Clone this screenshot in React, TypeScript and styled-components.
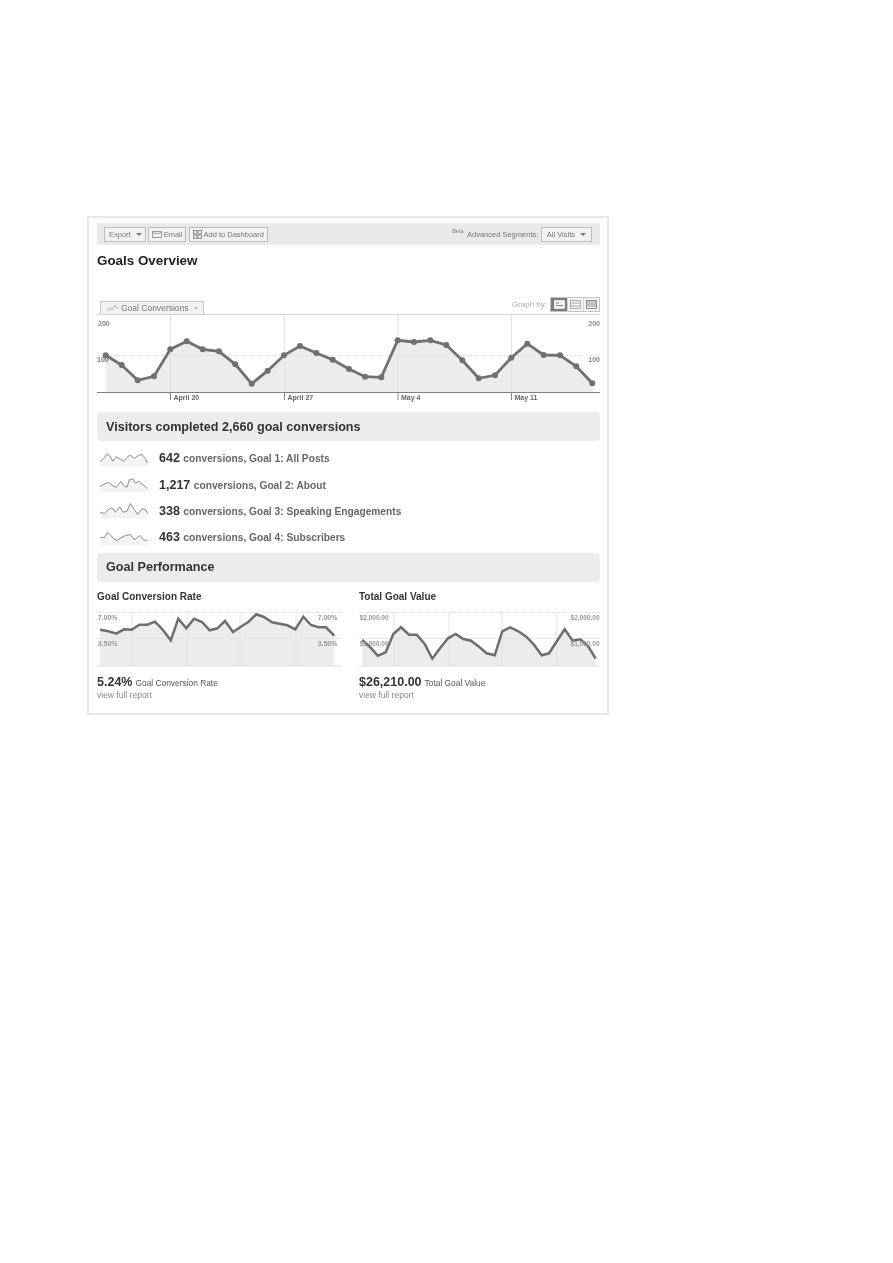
import React from 'react';
import styled, { createGlobalStyle } from 'styled-components';

const GlobalStyle = createGlobalStyle`
  html, body {
    margin: 0;
    padding: 0;
    background: #fff;
    font-family: "Liberation Sans", Arial, sans-serif;
  }
`;

// points read off the reference, in page pixels
const mainPoints: number[][] = [
  [105.7, 355.3], [121.7, 365], [137.7, 380.3], [154, 376.3], [170.3, 349.3], [186.7, 341.3],
  [202.7, 349.3], [219, 351.3], [235.3, 364.3], [251.7, 383.7], [267.7, 370.7], [284, 355.3],
  [300, 346], [316.3, 353], [332.7, 359.7], [349, 369], [365, 376.7], [381.3, 377.3],
  [397.7, 340.3], [414, 342], [430.3, 340.3], [446.3, 345], [462.3, 360.3], [478.7, 378.3],
  [495, 375.3], [511.3, 357.7], [527.3, 343.7], [543.7, 355], [560, 355.3], [576.3, 366.3],
  [592.3, 383.3],
];

const rateRaw = [
  [45, 149], [70, 154], [94, 161], [117, 148], [140, 149], [163, 134], [187, 134], [210, 125],
  [234, 150], [257, 181], [280, 116], [304, 145], [327, 116], [351, 126], [374, 151], [397, 145],
  [420, 123], [444, 156], [467, 140], [490, 126], [514, 103], [537, 111], [561, 127], [584, 131],
  [607, 136], [631, 148], [655, 110], [678, 135], [701, 142], [723, 142], [748, 167],
];

const valueRaw = [
  [52, 180], [75, 201], [98, 227], [122, 217], [145, 162], [168, 142], [192, 164], [215, 164],
  [239, 192], [262, 236], [285, 205], [309, 175], [332, 162], [355, 177], [378, 182], [402, 200],
  [425, 220], [449, 226], [472, 154], [495, 142], [519, 153], [544, 170], [567, 194], [590, 226],
  [612, 220], [636, 183], [659, 148], [683, 182], [706, 178], [729, 198], [752, 236],
];

// sparkline points in 3x crop coordinates, with the y shift of their crop
const sparkShapes: { shift: number; raw: number[][] }[] = [
  {
    shift: -2.5,
    raw: [[10, 38], [20, 30], [30, 17], [38, 22], [48, 38], [58, 25], [70, 32], [80, 38], [95, 22], [103, 22], [112, 30], [125, 20], [135, 18], [145, 30], [152, 45]],
  },
  {
    shift: -28.9,
    raw: [[10, 115], [22, 108], [35, 103], [45, 112], [58, 118], [72, 100], [80, 112], [90, 118], [97, 95], [108, 92], [115, 105], [125, 100], [140, 112], [152, 122]],
  },
  {
    shift: -3.5,
    raw: [[10, 38], [22, 42], [35, 30], [45, 25], [55, 38], [68, 22], [78, 38], [90, 35], [100, 12], [112, 30], [122, 45], [135, 28], [145, 30], [152, 42]],
  },
  {
    shift: -29.5,
    raw: [[10, 110], [22, 112], [32, 95], [42, 105], [50, 115], [60, 120], [72, 112], [85, 105], [100, 102], [112, 118], [122, 110], [130, 105], [140, 118], [152, 120]],
  },
];

const toLine = (pts: number[][]) => pts.map((p) => `${p[0].toFixed(1)},${p[1].toFixed(1)}`).join(' ');

const toArea = (pts: number[][], base: number) =>
  `${pts[0][0].toFixed(1)},${base} ${toLine(pts)} ${pts[pts.length - 1][0].toFixed(1)},${base}`;

const Page = styled.div`
  width: 893px;
  height: 1263px;
  padding: 216px 0 0 87px;
  box-sizing: border-box;
`;

const Panel = styled.div`
  width: 522px;
  height: 499px;
  box-sizing: border-box;
  border: 2px solid #e8e8e8;
  padding: 5px 7px 0 8px;
  color: #555;
  filter: grayscale(1) blur(0.3px);
`;

const Toolbar = styled.div`
  height: 22px;
  background: #e8e9e9;
  display: flex;
  align-items: center;
  padding: 0 8px 0 7px;
  gap: 2.5px;
  font-size: 7.5px;
`;

const ToolButton = styled.div`
  height: 15px;
  box-sizing: border-box;
  border: 1px solid #bdbdbd;
  background: #f2f2f2;
  color: #777;
  display: flex;
  align-items: center;
  gap: 1.5px;
  padding: 0 3px;
  white-space: nowrap;
`;

const ExportButton = styled(ToolButton)`
  padding: 0 3px 0 4px;
  gap: 3px;
`;

const SegmentButton = styled(ToolButton)`
  padding: 0 5px;
  gap: 3px;
`;

const Caret = styled.span`
  width: 0;
  height: 0;
  border-left: 3px solid transparent;
  border-right: 3px solid transparent;
  border-top: 3px solid #777;
  margin-left: 2px;
`;

const TabCaret = styled(Caret)`
  border-top-color: #bbb;
  border-left-width: 2.5px;
  border-right-width: 2.5px;
`;

const Spacer = styled.div`
  flex: 1;
`;

const Beta = styled.sup`
  font-size: 5.5px;
  color: #777;
  margin-right: 1px;
  line-height: 1;
  align-self: flex-start;
  margin-top: 6px;
`;

const SegmentLabel = styled.span`
  color: #777;
`;

const Heading = styled.h1`
  margin: 8px 0 0 0;
  height: 16px;
  font-size: 13.4px;
  line-height: 16px;
  font-weight: bold;
  color: #222;
`;

const GraphHead = styled.div`
  height: 45px;
  display: flex;
  align-items: flex-end;
  justify-content: space-between;
  padding: 0 0 0 3px;
  border-bottom: 1px solid #d4d4d4;
`;

const MetricTab = styled.div`
  height: 13px;
  box-sizing: border-box;
  width: 104px;
  border: 1px solid #c8c8c8;
  border-bottom: none;
  background: #f2f2f2;
  color: #777;
  font-size: 8.5px;
  display: flex;
  align-items: center;
  padding-left: 6px;
  gap: 3px;
`;

const GraphBy = styled.div`
  display: flex;
  align-items: center;
  height: 15px;
  padding-bottom: 2px;
  font-size: 8px;
  color: #aaa;
  gap: 3px;
`;

const ViewSwitch = styled.div`
  display: flex;
  border: 1px solid #c4c4c4;
  height: 15px;
  box-sizing: border-box;
`;

const ViewButton = styled.div<{ $active?: boolean }>`
  width: 16px;
  box-sizing: border-box;
  display: flex;
  align-items: center;
  justify-content: center;
  background: ${(p) => (p.$active ? '#7b7b7b' : '#f4f4f4')};
  border-left: ${(p) => (p.$active ? 'none' : '1px solid #d4d4d4')};
`;

const ChartSvg = styled.svg`
  display: block;
  font-family: "Liberation Sans", Arial, sans-serif;
`;

const SectionBar = styled.div<{ $top: number }>`
  margin-top: ${(p) => p.$top}px;
  height: 29px;
  background: #ececec;
  border-radius: 4px;
  display: flex;
  align-items: center;
  padding-left: 9px;
  font-size: 12.6px;
  font-weight: bold;
  color: #333;
`;

const GoalList = styled.div`
  display: flex;
  flex-direction: column;
  padding: 4px 0 2px 3px;
`;

const GoalRow = styled.div`
  height: 26.4px;
  display: flex;
  align-items: center;
  gap: 11px;
  font-size: 10.2px;
  font-weight: bold;
  color: #666;
`;

const GoalCount = styled.span`
  font-size: 12.5px;
  color: #333;
  margin-right: 3.5px;
`;

const Columns = styled.div`
  display: grid;
  grid-template-columns: 262px 1fr;
`;

const Column = styled.div`
  display: flex;
  flex-direction: column;
`;

const ColumnTitle = styled.div`
  margin: 8px 0 3px;
  height: 13px;
  line-height: 13px;
  font-size: 10px;
  font-weight: bold;
  color: #333;
`;

const Total = styled.div`
  margin-top: 7px;
  display: flex;
  align-items: baseline;
  gap: 3px;
  height: 16px;
  font-size: 8.4px;
  color: #555;
`;

const TotalValue = styled.span`
  font-size: 12.5px;
  font-weight: bold;
  color: #333;
`;

const ReportLink = styled.div`
  font-size: 8.5px;
  line-height: 9px;
  color: #888;
`;

const DashIcon = () => (
  <svg width="9" height="9" viewBox="0 0 9 9" fill="none" stroke="#777" strokeWidth="0.8">
    <rect x="0.5" y="0.5" width="3.4" height="3.4" />
    <rect x="5" y="0.5" width="3.4" height="3.4" />
    <rect x="0.5" y="5" width="3.4" height="3.4" />
    <rect x="5" y="5" width="3.4" height="3.4" />
  </svg>
);

const MailIcon = () => (
  <svg width="10" height="7" viewBox="0 0 10 7" fill="none" stroke="#888" strokeWidth="0.8">
    <rect x="0.5" y="0.5" width="9" height="6" />
    <path d="M0.5 1 L3 2.5 H7 L9.5 1" />
  </svg>
);

const LineIcon = () => (
  <svg width="11" height="8" viewBox="0 0 11 8" fill="none" stroke="#999" strokeWidth="0.8">
    <path d="M0.5 7 L3 4 L5 6 L8 1.5 L10.5 4.5" />
  </svg>
);

const CompactViewIcon = () => (
  <svg width="11" height="9" viewBox="0 0 11 9" fill="#f2f2f2" stroke="#f2f2f2" strokeWidth="0.8">
    <rect x="0.5" y="0.5" width="10" height="8" />
    <path d="M2 3 H5 M2 5.5 H9" stroke="#666" fill="none" />
  </svg>
);

const ViewIcon = ({ lines, tone }: { lines: number[]; tone: string }) => (
  <svg width="11" height="9" viewBox="0 0 11 9" fill="none" stroke={tone} strokeWidth="0.8">
    <rect x="0.5" y="0.5" width="10" height="8" />
    {lines.map((y) => (
      <path key={y} d={`M1 ${y} H10`} />
    ))}
  </svg>
);

const dateTicks = [
  { x: 170.5, label: 'April 20' },
  { x: 284.5, label: 'April 27' },
  { x: 398, label: 'May 4' },
  { x: 511.5, label: 'May 11' },
];

function MainChart() {
  // svg origin is at page (97, 315)
  const pts = mainPoints.map((p) => [p[0] - 97, p[1] - 315]);
  return (
    <ChartSvg width="503" height="91" viewBox="0 0 503 91">
      <polygon points={toArea(pts, 77)} fill="#ececec" />
      <line x1="0" y1="40.5" x2="503" y2="40.5" stroke="#dcdcdc" strokeDasharray="1 1" />
      {dateTicks.map((t) => (
        <line key={t.x} x1={t.x - 97} y1="0" x2={t.x - 97} y2="77" stroke="#e2e2e2" />
      ))}
      <line x1="0" y1="77.5" x2="503" y2="77.5" stroke="#808080" />
      <polyline points={toLine(pts)} fill="none" stroke="#707070" strokeWidth="2.8" />
      {pts.map((p) => (
        <circle key={p[0]} cx={p[0]} cy={p[1]} r="3" fill="#707070" />
      ))}
      {dateTicks.map((t) => (
        <g key={t.label}>
          <line x1={t.x - 97} y1="77" x2={t.x - 97} y2="85" stroke="#888" />
          <text x={t.x - 94} y="85" fontSize="7" fontWeight="bold" fill="#666">{t.label}</text>
        </g>
      ))}
      <text x="1" y="11" fontSize="7" fontWeight="bold" fill="#888">200</text>
      <text x="0" y="47" fontSize="7" fontWeight="bold" fill="#777">100</text>
      <text x="503" y="11" fontSize="7" fontWeight="bold" fill="#888" textAnchor="end">200</text>
      <text x="503" y="47" fontSize="7" fontWeight="bold" fill="#888" textAnchor="end">100</text>
    </ChartSvg>
  );
}

function Spark({ shift, raw }: { shift: number; raw: number[][] }) {
  const pts = raw.map((p) => [p[0] / 3 - 3, p[1] / 3 + shift]);
  return (
    <svg width="48" height="15" viewBox="0 0 48 15">
      <polygon points={toArea(pts, 15)} fill="#f4f4f4" />
      <polyline points={toLine(pts)} fill="none" stroke="#808080" strokeWidth="0.9" />
    </svg>
  );
}

type SmallChartProps = {
  raw: number[][];
  originX: number;
  width: number;
  labelSize: number;
  top: string;
  middle: string;
  gridX: number[];
};

function SmallChart({ raw, originX, width, labelSize, top, middle, gridX }: SmallChartProps) {
  // raw values are 3x crop coordinates, svg origin sits at page y 606
  const pts = raw.map((p) => [p[0] / 3 + originX, p[1] / 3 + 580 - 606]);
  return (
    <ChartSvg width={width} height="62" viewBox={`0 0 ${width} 62`}>
      <polygon points={toArea(pts, 60)} fill="#ececec" />
      <line x1="0" y1="6.5" x2={width} y2="6.5" stroke="#dcdcdc" strokeDasharray="1 1" />
      <line x1="0" y1="32.5" x2={width} y2="32.5" stroke="#e4e4e4" />
      {gridX.map((x) => (
        <line key={x} x1={x} y1="6" x2={x} y2="60" stroke="#e2e2e2" />
      ))}
      <line x1="0" y1="60" x2={width} y2="60" stroke="#e0e0e0" />
      <polyline points={toLine(pts)} fill="none" stroke="#6e6e6e" strokeWidth="2.5" />
      <text x="0.7" y="14" fontSize={labelSize} fontWeight="bold" fill="#999">{top}</text>
      <text x="0.7" y="39.5" fontSize={labelSize} fontWeight="bold" fill="#999">{middle}</text>
      <text x="240.5" y="14" fontSize={labelSize} fontWeight="bold" fill="#999" textAnchor="end">{top}</text>
      <text x="240.5" y="39.5" fontSize={labelSize} fontWeight="bold" fill="#999" textAnchor="end">{middle}</text>
    </ChartSvg>
  );
}

const goals = [
  { count: '642', label: 'conversions, Goal 1: All Posts' },
  { count: '1,217', label: 'conversions, Goal 2: About' },
  { count: '338', label: 'conversions, Goal 3: Speaking Engagements' },
  { count: '463', label: 'conversions, Goal 4: Subscribers' },
];

export default function App() {
  return (
    <Page>
      <GlobalStyle />
      <Panel>
        <Toolbar>
          <ExportButton>Export <Caret /></ExportButton>
          <ToolButton><MailIcon /> Email</ToolButton>
          <ToolButton><DashIcon /> Add to Dashboard</ToolButton>
          <Spacer />
          <Beta>Beta</Beta>
          <SegmentLabel>Advanced Segments:</SegmentLabel>
          <SegmentButton>All Visits <Caret /></SegmentButton>
        </Toolbar>
        <Heading>Goals Overview</Heading>
        <GraphHead>
          <MetricTab><LineIcon /> Goal Conversions <TabCaret /></MetricTab>
          <GraphBy>
            Graph by:
            <ViewSwitch>
              <ViewButton $active><CompactViewIcon /></ViewButton>
              <ViewButton><ViewIcon lines={[3, 6]} tone="#999" /></ViewButton>
              <ViewButton><ViewIcon lines={[2, 4, 6]} tone="#777" /></ViewButton>
            </ViewSwitch>
          </GraphBy>
        </GraphHead>
        <MainChart />
        <SectionBar $top={6}>Visitors completed 2,660 goal conversions</SectionBar>
        <GoalList>
          {goals.map((g, i) => (
            <GoalRow key={g.count}>
              <Spark shift={sparkShapes[i].shift} raw={sparkShapes[i].raw} />
              <span><GoalCount>{g.count}</GoalCount>{g.label}</span>
            </GoalRow>
          ))}
        </GoalList>
        <SectionBar $top={0}>Goal Performance</SectionBar>
        <Columns>
          <Column>
            <ColumnTitle>Goal Conversion Rate</ColumnTitle>
            <SmallChart raw={rateRaw} originX={-12} width={245} labelSize={7} top="7.00%" middle="3.50%" gridX={[35, 90, 143, 199]} />
            <Total><TotalValue>5.24%</TotalValue> Goal Conversion Rate</Total>
            <ReportLink>view full report</ReportLink>
          </Column>
          <Column>
            <ColumnTitle>Total Goal Value</ColumnTitle>
            <SmallChart raw={valueRaw} originX={-14} width={241} labelSize={6.5} top="$2,000.00" middle="$1,000.00" gridX={[35, 90, 143, 198]} />
            <Total><TotalValue>$26,210.00</TotalValue> Total Goal Value</Total>
            <ReportLink>view full report</ReportLink>
          </Column>
        </Columns>
      </Panel>
    </Page>
  );
}
